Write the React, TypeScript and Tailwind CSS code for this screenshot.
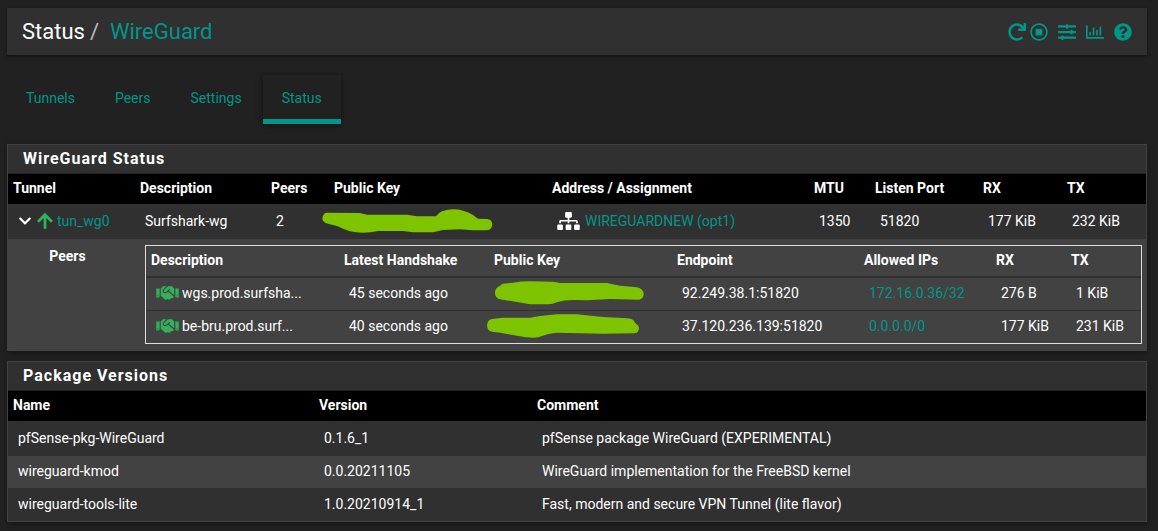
import type { ReactNode } from "react";
import {
  FaArrowUp,
  FaChevronDown,
  FaHandshake,
  FaQuestionCircle,
  FaRedo,
  FaRegChartBar,
  FaRegStopCircle,
  FaSitemap,
  FaSlidersH,
} from "react-icons/fa";

const tabs = ["Tunnels", "Peers", "Settings", "Status"];

const tunnelColumns = [
  { label: "Tunnel", width: "w-[127px]" },
  { label: "Description", width: "w-[131px]" },
  { label: "Peers", width: "w-[63px]" },
  { label: "Public Key", width: "w-[218px]" },
  { label: "Address / Assignment", width: "w-[262px]" },
  { label: "MTU", width: "w-[61px]" },
  { label: "Listen Port", width: "w-[108px]" },
  { label: "RX", width: "w-[84px]" },
  { label: "TX", width: "w-[84px]" },
];

const peerColumns = [
  { label: "Description", width: "w-[193px]" },
  { label: "Latest Handshake", width: "w-[150px]" },
  { label: "Public Key", width: "w-[183px]" },
  { label: "Endpoint", width: "w-[187px]" },
  { label: "Allowed IPs", width: "w-[132px]" },
  { label: "RX", width: "w-[75px]" },
  { label: "TX", width: "w-[75px]" },
];

const tunnelKeyMark =
  "M0.3 10C0.5 6.5 2 4 4.7 3.7L38 4L45 5.7H85L95 7.3H114Q116 4 120 2.3Q126 0.4 131 0.3Q137 0.3 141 1.7Q147 3 151 6L156 9.7L165 10Q170 10.5 170.3 15.3Q170 20.8 165 21.3H150L138 20.3L121 21L111 23.3H91L81 22H56Q49 23.7 41 23.7Q34 23.7 28 22.3Q21 20 15 17L6 14.7Q1 13.5 0.3 10Z";

const peers = [
  {
    name: "wgs.prod.surfsha...",
    handshake: "45 seconds ago",
    endpoint: "92.249.38.1:51820",
    allowed: "172.16.0.36/32",
    rx: "276 B",
    tx: "1 KiB",
    markClass: "-ml-[5px]",
    mark: "M1 12.3Q1 6.5 6 5Q6.500 3.500 9 2.700L19 1.700Q27 0.300 36 0.300L59 0.700L66 2H113L126 4.700L143 6.300Q149.700 8 149.700 13Q149.500 18 145 18.700L116 18L93 19.300L79 19Q70 19 62.700 21.300Q59 23.300 54 23.300H36L23 21L6 18.300Q1 17 1 12.300Z",
  },
  {
    name: "be-bru.prod.surf...",
    handshake: "40 seconds ago",
    endpoint: "37.120.236.139:51820",
    allowed: "0.0.0.0/0",
    rx: "177 KiB",
    tx: "231 KiB",
    markClass: "-ml-[13px]",
    mark: "M1 11.7Q1 6 6 5L17 3.700H44L54 2L71 0.300H91L117 3L141 4.300Q146 4.300 148 7Q149 10 151 10.500Q153 12 153 14Q152.500 19 149 19.300L117 19.700L94 19.300L71 18.700Q63 19 57 21.700Q52 23.700 47 23.700Q40 23.700 34 22.300L14 18.700L6 17.700Q1.500 17 1 11.700Z",
  },
];

const packages = [
  ["pfSense-pkg-WireGuard", "0.1.6_1", "pfSense package WireGuard (EXPERIMENTAL)"],
  ["wireguard-kmod", "0.0.20211105", "WireGuard implementation for the FreeBSD kernel"],
  ["wireguard-tools-lite", "1.0.20210914_1", "Fast, modern and secure VPN Tunnel (lite flavor)"],
];

function Panel({ title, children }: { title: string; children: ReactNode }) {
  return (
    <section className="border border-[#424242] bg-[#303030] shadow-[0_2px_6px_rgba(0,0,0,0.4)]">
      <h2 className="h-[29px] border-b border-[#212121] px-[15px] text-[16px] leading-7 font-bold tracking-[1px]">
        {title}
      </h2>
      {children}
    </section>
  );
}

function Cell({ children }: { children: ReactNode }) {
  return <td className="px-[10px] pb-[2px]">{children}</td>;
}

function KeyMark({ path, className }: { path: string; className: string }) {
  return (
    <svg
      role="img"
      aria-label="Hidden key"
      width="172"
      height="24"
      viewBox="0 0 172 24"
      className={`block max-w-none ${className}`}
    >
      <path d={path} fill="#7fc400" />
    </svg>
  );
}

function ActionLink({ label, children, className = "" }: { label: string; children: ReactNode; className?: string }) {
  return (
    <a href="#" aria-label={label} title={label} className={className}>
      {children}
    </a>
  );
}

export default function App() {
  return (
    <div className="min-h-screen bg-[#212121] pt-2 pr-[11px] pb-2 pl-[7px] font-[Roboto,sans-serif] text-[14px] leading-5 text-white">
      <header className="flex h-[47px] items-center justify-between bg-[#303030] px-[15px] shadow-[0_1px_3px_rgba(0,0,0,0.5)]">
        <h1 className="flex text-[22px] leading-6">
          <span>Status</span>
          <span className="mx-[5px] text-[#bbb]">/</span>
          <a href="#" className="ml-[6px] text-[#009688]">
            WireGuard
          </a>
        </h1>
        <nav aria-label="Page actions" className="flex text-[18px] text-[#009688]">
          <ActionLink label="Restart service"><FaRedo /></ActionLink>
          <ActionLink label="Stop service" className="ml-1"><FaRegStopCircle /></ActionLink>
          <ActionLink label="Related settings" className="ml-[10px]"><FaSlidersH /></ActionLink>
          <ActionLink label="Monitoring" className="ml-[10px]"><FaRegChartBar /></ActionLink>
          <ActionLink label="Help" className="ml-[10px]"><FaQuestionCircle /></ActionLink>
        </nav>
      </header>

      <nav aria-label="WireGuard" className="mt-5 mb-5 flex gap-[2px] text-[#009688]">
        {tabs.map((tab) => (
          <a
            key={tab}
            href="#"
            aria-current={tab === "Status" ? "page" : undefined}
            className={
              tab === "Status"
                ? "border-b-[5px] border-[#009688] px-[19px] pt-[13px] pb-[11px] shadow-[0_1px_6px_rgba(0,0,0,0.5)]"
                : "border-b-[5px] border-transparent px-[19px] pt-[13px] pb-[11px]"
            }
          >
            {tab}
          </a>
        ))}
      </nav>

      <main className="flex flex-col gap-[10px]">
        <Panel title="WireGuard Status">
          <table className="w-full table-fixed text-left">
            <thead className="bg-black">
              <tr className="h-[30px]">
                {tunnelColumns.map((column) => (
                  <th key={column.label} className={`px-[5px] pb-[2px] font-bold ${column.width}`}>
                    {column.label}
                  </th>
                ))}
              </tr>
            </thead>
            <tbody>
              <tr className="h-[35px]">
                <Cell>
                  <div className="flex items-center whitespace-nowrap">
                    <FaChevronDown className="text-[14px]" />
                    <FaArrowUp className="ml-1 text-[18px] text-[#33b05a]" />
                    <a href="#" className="ml-[3px] text-[#009688]">tun_wg0</a>
                  </div>
                </Cell>
                <Cell>Surfshark-wg</Cell>
                <Cell>2</Cell>
                <Cell>
                  <KeyMark path={tunnelKeyMark} className="-ml-[17px]" />
                </Cell>
                <Cell>
                  <div className="flex items-center whitespace-nowrap">
                    <FaSitemap className="h-[18px] w-[23px]" />
                    <a href="#" className="ml-[5px] text-[#009688]">WIREGUARDNEW (opt1)</a>
                  </div>
                </Cell>
                <Cell>1350</Cell>
                <Cell>51820</Cell>
                <Cell>177 KiB</Cell>
                <Cell>232 KiB</Cell>
              </tr>
              <tr className="bg-[#424242] align-top">
                <th className="pt-[7px] pr-3 pl-1 text-center font-bold">Peers</th>
                <td colSpan={8} className="pt-[6px] pr-[4px] pb-[6px] pl-[10px]">
                  <div className="border border-[#ddd]">
                    <table className="w-full table-fixed text-left">
                      <thead>
                        <tr className="h-[31px] border-b-2 border-[#303030]">
                          {peerColumns.map((column) => (
                            <th key={column.label} className={`px-[5px] pb-[3px] align-middle font-bold ${column.width}`}>
                              {column.label}
                            </th>
                          ))}
                        </tr>
                      </thead>
                      <tbody>
                        {peers.map((peer) => (
                          <tr key={peer.name} className="h-[33px] border-b border-[#303030] align-middle last:border-b-0">
                            <Cell>
                              <div className="flex items-center whitespace-nowrap">
                                <FaHandshake className="h-[18px] w-[23px] text-[#33b05a]" />
                                <span className="ml-[3px]">{peer.name}</span>
                              </div>
                            </Cell>
                            <Cell>{peer.handshake}</Cell>
                            <Cell>
                              <KeyMark path={peer.mark} className={peer.markClass} />
                            </Cell>
                            <Cell>{peer.endpoint}</Cell>
                            <Cell>
                              <a href="#" className="text-[#009688]">{peer.allowed}</a>
                            </Cell>
                            <Cell>{peer.rx}</Cell>
                            <Cell>{peer.tx}</Cell>
                          </tr>
                        ))}
                      </tbody>
                    </table>
                  </div>
                </td>
              </tr>
            </tbody>
          </table>
        </Panel>

        <Panel title="Package Versions">
          <table className="w-full table-fixed text-left">
            <thead className="bg-black">
              <tr className="h-[30px]">
                <th className="w-[306px] px-[5px] pb-[2px] font-bold">Name</th>
                <th className="w-[218px] px-[5px] pb-[2px] font-bold">Version</th>
                <th className="w-[614px] px-[5px] pb-[2px] font-bold">Comment</th>
              </tr>
            </thead>
            <tbody>
              {packages.map(([name, version, comment]) => (
                <tr key={name} className="h-8 first:h-[35px] last:h-[33px] even:bg-[#424242]">
                  <Cell>{name}</Cell>
                  <Cell>{version}</Cell>
                  <Cell>{comment}</Cell>
                </tr>
              ))}
            </tbody>
          </table>
        </Panel>
      </main>
    </div>
  );
}
